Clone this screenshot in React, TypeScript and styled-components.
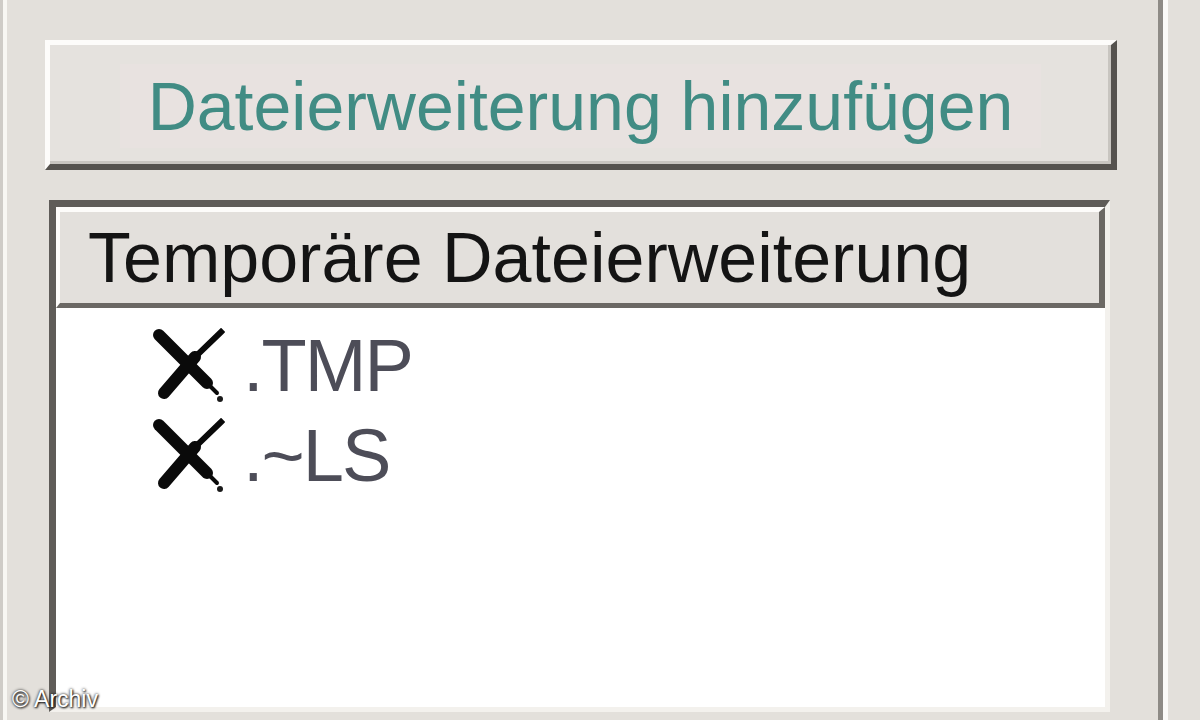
import * as React from "react";
import styled, { createGlobalStyle } from "styled-components";

const GlobalStyle = createGlobalStyle`
  html, body {
    margin: 0;
    padding: 0;
    background: #e3e0db;
    font-family: "Liberation Sans", Arial, sans-serif;
  }
`;

const Window = styled.div`
  position: relative;
  display: flex;
  width: 1200px;
  height: 720px;
  overflow: hidden;
  background: #e3e0db;
`;

// group box edge: light line left, etched dark/light line right
const Pane = styled.div`
  display: flex;
  flex-direction: column;
  box-sizing: border-box;
  width: 1165px;
  height: 720px;
  margin-left: 3px;
  padding: 40px 46px 8px 38px;
  border-left: 4px solid #f8f7f3;
  border-right: 5px solid #fbfaf8;
  box-shadow: inset -5px 0 0 #8e8b86, -3px 0 0 #cfccc7;
`;

const AddButton = styled.button`
  display: flex;
  align-items: center;
  justify-content: center;
  box-sizing: border-box;
  width: 100%;
  height: 130px;
  margin: 0;
  padding: 0;
  border-style: solid;
  border-width: 5px 6px 6px 5px;
  border-color: #fdfcfa #55524e #55524e #fdfcfa;
  background: #e5e2de;
  box-shadow: inset -3px -3px 0 #c8c5c0;
  font-family: "Liberation Sans", Arial, sans-serif;
  font-size: 68px;
  color: #418c84;
  cursor: default;
`;

const ButtonLabel = styled.span`
  padding: 4px 28px;
  margin-top: 2px;
  background: rgba(236, 226, 226, 0.5);
  line-height: 76px;
`;

const ListView = styled.div`
  display: flex;
  flex-direction: column;
  flex: 1;
  margin: 30px 7px 0 4px;
  border-style: solid;
  border-width: 7px 5px 5px 7px;
  border-color: #5f5c58 #f3f1ed #f3f1ed #5f5c58;
  background: #ffffff;
`;

const Header = styled.div`
  box-sizing: border-box;
  height: 101px;
  padding: 6px 0 0 28px;
  border-style: solid;
  border-width: 5px 6px 5px 4px;
  border-color: #fdfcfa #6b6864 #6b6864 #fdfcfa;
  background: #e3e0dc;
  font-size: 70px;
  line-height: 80px;
  color: #141414;
  white-space: nowrap;
`;

const Items = styled.div`
  display: flex;
  flex-direction: column;
  padding: 13px 0 0 97px;
`;

const Row = styled.div`
  display: flex;
  align-items: center;
  gap: 18px;
  height: 90px;
`;

const ItemText = styled.span`
  font-size: 74px;
  line-height: 90px;
  letter-spacing: -2px;
  color: #4d4d58;
`;

const Watermark = styled.div`
  position: absolute;
  left: 12px;
  bottom: 10px;
  font-size: 23px;
  line-height: 22px;
  color: #ffffff;
  text-shadow: 0 0 3px #000000, 1px 1px 2px #222222;
`;

const DeleteMark = () => (
  <svg width="72" height="76" viewBox="0 0 72 76">
    <g stroke="#0a0a0a" fill="none">
      <path d="M6 7 L54 55" strokeWidth="12" strokeLinecap="round" />
      <path d="M52 53 L64 65" strokeWidth="4" strokeLinecap="round" />
      <path d="M68 4 L40 31" strokeWidth="6" strokeLinecap="square" />
      <path d="M42 29 L11 65" strokeWidth="12" strokeLinecap="round" />
    </g>
    <circle cx="67" cy="71" r="3" fill="#1a1a1a" />
  </svg>
);

const extensions = [".TMP", ".~LS"];

export default function App() {
  return (
    <>
      <GlobalStyle />
      <Window>
        <Pane>
          <AddButton>
            <ButtonLabel>Dateierweiterung hinzufügen</ButtonLabel>
          </AddButton>
          <ListView>
            <Header>Temporäre Dateierweiterung</Header>
            <Items>
              {extensions.map((ext) => (
                <Row key={ext}>
                  <DeleteMark />
                  <ItemText>{ext}</ItemText>
                </Row>
              ))}
            </Items>
          </ListView>
        </Pane>
        <Watermark>© Archiv</Watermark>
      </Window>
    </>
  );
}
